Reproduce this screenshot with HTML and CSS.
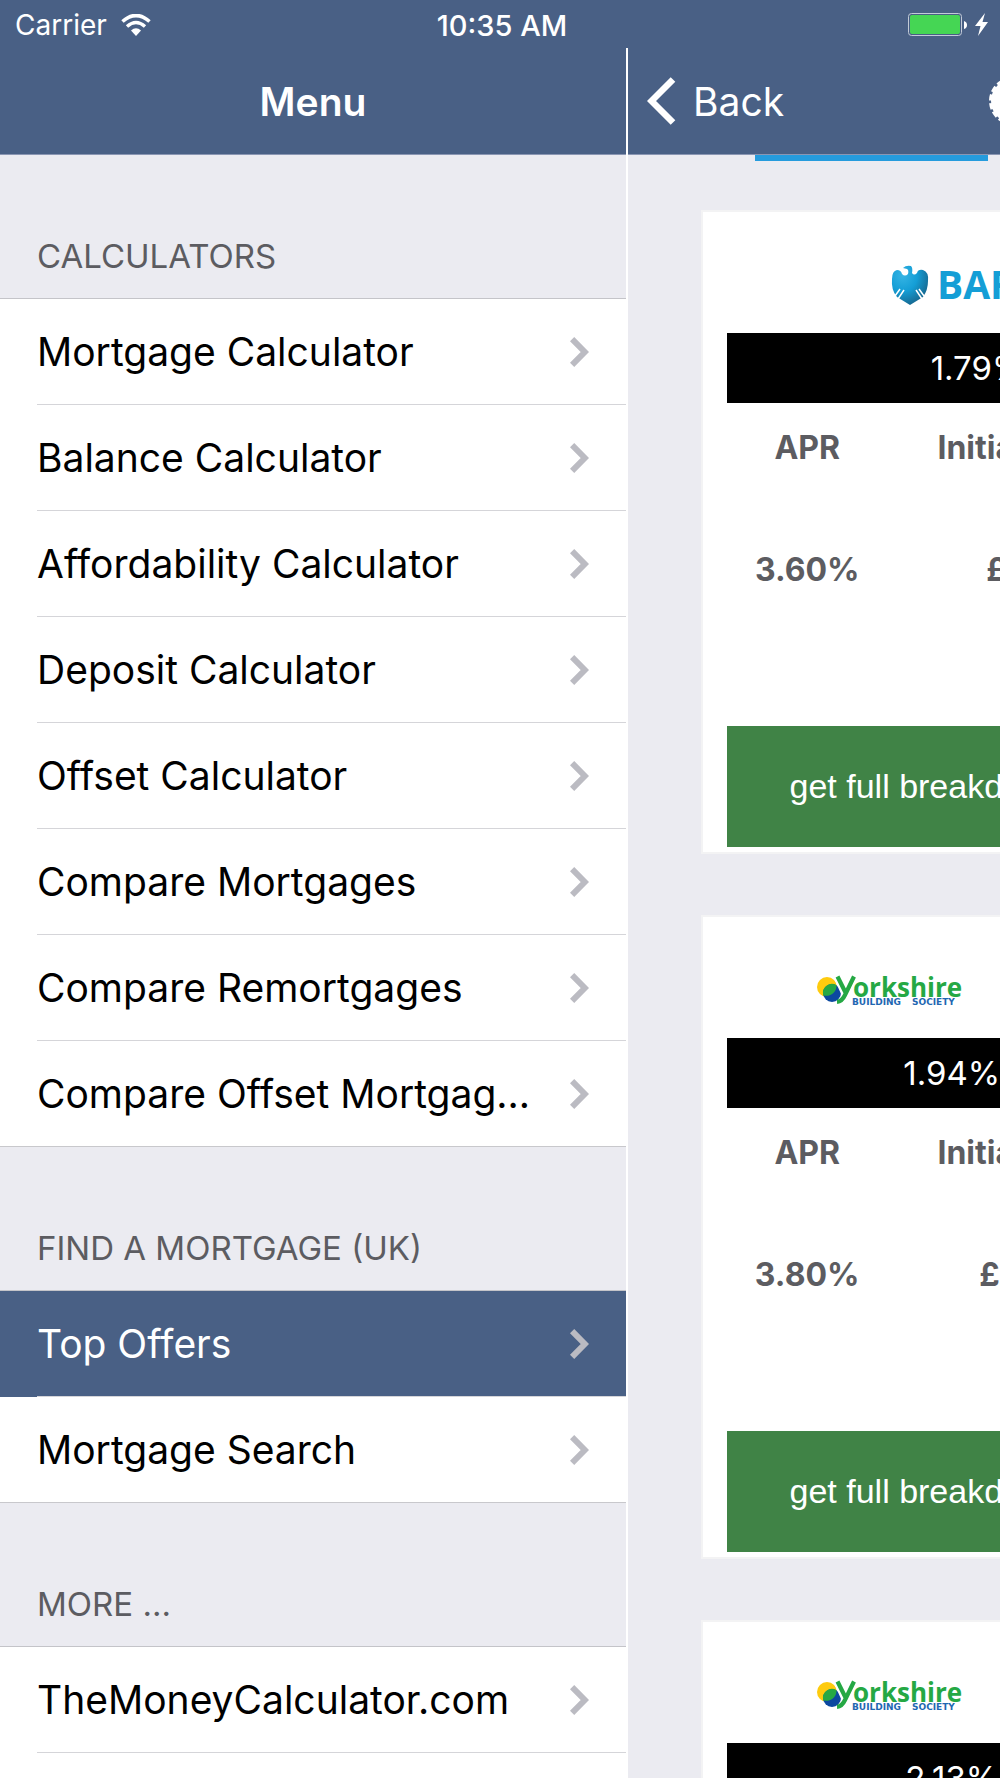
FILE: index.html
```html
<!DOCTYPE html>
<html lang="en">
<head>
    <meta charset="UTF-8">
    <meta name="viewport" content="width=device-width, initial-scale=1">
    <title>Menu</title>
    <link rel="stylesheet" href="styles.css">
</head>
<body>
    <!-- shared shapes -->
    <svg class="defs" aria-hidden="true">
        <symbol id="chevron" viewBox="0 0 19 30">
            <path d="M2.1 2.1 L14.8 15 L2.1 27.9" fill="none" stroke="currentColor" stroke-width="6"/>
        </symbol>
        <symbol id="yorkshire" viewBox="0 0 160 34">
            <circle cx="10" cy="12" r="10" fill="#fecb0e"/>
            <circle cx="15" cy="18" r="9" fill="#0b48a0"/>
            <path d="M6.2 20.2 A9 9 0 0 1 19.5 10.2 A10 10 0 0 1 6.2 20.2 Z" fill="#25a844"/>
            <path d="M17 0 L28 24" stroke="#fff" stroke-width="3"/>
            <path d="M20.5 1.5 L29 18.5 M37 1.5 L28 20 Q25 26.5 20 26.8" fill="none" stroke="#25a844" stroke-width="4.2"/>
            <text x="36" y="22" class="york-name">orkshire</text>
            <text x="35" y="30" class="york-sub">BUILDING</text>
            <text x="95" y="30" class="york-sub">SOCIETY</text>
        </symbol>
    </svg>

    <header class="status-bar">
        <div class="carrier">
            <span>Carrier</span>
            <svg width="30" height="22" viewBox="0 0 30 22" aria-hidden="true">
                <path d="M1.5 7.5 Q15 -4.5 28.5 7.5" fill="none" stroke="#fff" stroke-width="3.6"/>
                <path d="M6 12.4 Q15 4.4 24 12.4" fill="none" stroke="#fff" stroke-width="3.4"/>
                <path d="M10 16.6 Q15 12 20 16.6 L15 22 Z" fill="#fff"/>
            </svg>
        </div>
        <time>10:35 AM</time>
        <svg class="battery" width="82" height="26" viewBox="0 0 82 26" aria-hidden="true">
            <rect x="1.5" y="1.5" width="53" height="22" rx="3" fill="none" stroke="#c3cbd8"/>
            <rect x="3" y="3" width="50" height="19" rx="2" fill="#45d654"/>
            <path d="M57 9 Q60 10 60 13 Q60 16 57 17 Z" fill="#fff"/>
            <path d="M78 1 L68 14 H73.500 L71 24 L81 10 H75.500 Z" fill="#fff"/>
        </svg>
    </header>

    <div class="split">
        <nav class="sidebar">
            <div class="nav-bar">
                <h1>Menu</h1>
            </div>

            <h2>CALCULATORS</h2>
            <ul class="menu">
                <li><a href="#"><span>Mortgage Calculator</span><svg><use href="#chevron"/></svg></a></li>
                <li><a href="#"><span>Balance Calculator</span><svg><use href="#chevron"/></svg></a></li>
                <li><a href="#"><span>Affordability Calculator</span><svg><use href="#chevron"/></svg></a></li>
                <li><a href="#"><span>Deposit Calculator</span><svg><use href="#chevron"/></svg></a></li>
                <li><a href="#"><span>Offset Calculator</span><svg><use href="#chevron"/></svg></a></li>
                <li><a href="#"><span>Compare Mortgages</span><svg><use href="#chevron"/></svg></a></li>
                <li><a href="#"><span>Compare Remortgages</span><svg><use href="#chevron"/></svg></a></li>
                <li><a href="#"><span>Compare Offset Mortgag...</span><svg><use href="#chevron"/></svg></a></li>
            </ul>

            <h2>FIND A MORTGAGE (UK)</h2>
            <ul class="menu">
                <li class="selected"><a href="#"><span>Top Offers</span><svg><use href="#chevron"/></svg></a></li>
                <li><a href="#"><span>Mortgage Search</span><svg><use href="#chevron"/></svg></a></li>
            </ul>

            <h2>MORE ...</h2>
            <ul class="menu open">
                <li><a href="#"><span>TheMoneyCalculator.com</span><svg><use href="#chevron"/></svg></a></li>
            </ul>
        </nav>

        <!-- full width page, pushed aside by the open menu -->
        <main class="page">
            <div class="nav-bar">
                <button class="back" type="button">
                    <svg width="29" height="48" viewBox="0 0 29 48" aria-hidden="true">
                        <path d="M26 2.500 L4.500 24 L26 45.500" fill="none" stroke="#fff" stroke-width="6.500"/>
                    </svg>
                    Back
                </button>
                <svg class="gear" width="50" height="50" viewBox="0 0 50 50" aria-hidden="true">
                    <circle cx="25" cy="25" r="22" fill="#fff"/>
                    <circle cx="25" cy="25" r="22" fill="none" stroke="#fff" stroke-width="4" stroke-dasharray="6 2.640"/>
                </svg>
            </div>
            <div class="tab-line"></div>

            <section class="card">
                <div class="logo barclays">
                    <svg width="270" height="42" viewBox="0 0 270 42" role="img" aria-label="Barclays">
                        <defs>
                            <radialGradient id="eagle" cx="0.3" cy="0.25" r="0.8">
                                <stop offset="0" stop-color="#35b4e4"/>
                                <stop offset="0.5" stop-color="#149ed6"/>
                                <stop offset="1" stop-color="#17658c"/>
                            </radialGradient>
                        </defs>
                        <path d="M12 3 Q15 0 20 1 Q22 3 21 8 Q23 11 26 8 Q27 4 32 5 Q38 7 37 16 Q37 25 32 32 L19 40 L6 32 Q0 25 1 14 Q1 6 6 5 Q10 5 11 9 Q14 12 17 9 Q18 5 16 4 Z" fill="url(#eagle)"/>
                        <path d="M9 24 L4 31 M13 25 L7 34 M28 24 L33 31 M25 25 L31 34" stroke="#fff" stroke-width="1.500"/>
                        <text x="46" y="34" class="barclays-name">BARCLAYS</text>
                    </svg>
                </div>
                <p class="rate">1.79% fixed until Jul 2019</p>
                <table>
                    <tr><th>APR</th><th>Initial Rates</th><th></th></tr>
                    <tr><td>3.60%</td><td>£999</td><td></td></tr>
                </table>
                <button class="more" type="button">get full breakdown</button>
            </section>

            <section class="card">
                <div class="logo yorkshire">
                    <svg width="160" height="34" role="img" aria-label="Yorkshire Building Society"><use href="#yorkshire"/></svg>
                </div>
                <p class="rate">1.94% 2 year fixed until 2019</p>
                <table>
                    <tr><th>APR</th><th>Initial Rates</th><th></th></tr>
                    <tr><td>3.80%</td><td>£1495</td><td></td></tr>
                </table>
                <button class="more" type="button">get full breakdown</button>
            </section>

            <section class="card">
                <div class="logo yorkshire">
                    <svg width="160" height="34" role="img" aria-label="Yorkshire Building Society"><use href="#yorkshire"/></svg>
                </div>
                <p class="rate">2.13% 2 year fixed until 2019</p>
            </section>
        </main>
    </div>
</body>
</html>
```
FILE: styles.css
```css
* {
    box-sizing: border-box;
}
body {
    margin: 0;
    height: 100vh;
    display: flex;
    flex-direction: column;
    overflow: hidden;
    font-family: Inter, "Liberation Sans", sans-serif;
    background-color: #ebebf1;
}
h1, h2, p, ul {
    margin: 0;
    padding: 0;
    font-weight: normal;
}
button {
    border: none;
    color: white;
    cursor: pointer;
}
.defs {
    display: none;
}
.status-bar {
    flex: none;
    display: grid;
    grid-template-columns: 1fr auto 1fr;
    align-items: center;
    height: 48px;
    padding: 2px 11px 0 15px;
    font-size: 28px;
    color: white;
    background-color: #496085;
}
.status-bar time {
    font-size: 29px;
    font-weight: 500;
}
.carrier {
    display: flex;
    align-items: center;
    gap: 14px;
}
.battery {
    justify-self: end;
}
.split {
    flex: 1;
    min-height: 0;
    display: flex;
    overflow: hidden;
}
.sidebar {
    flex: none;
    width: 62.8%;
    border-right: 2px solid white;
}
.nav-bar {
    display: flex;
    align-items: center;
    height: 107px;
    border-bottom: 1px solid #8a96b3;
    color: white;
    background-color: #496085;
}
.nav-bar h1 {
    flex: 1;
    font-size: 39px;
    font-weight: 600;
    text-align: center;
}
.sidebar h2 {
    height: 143px;
    padding: 81px 37px 0;
    font-size: 33px;
    line-height: 40px;
    color: #5c5c61;
}
.menu {
    list-style: none;
    border-top: 1px solid #c4c4c9;
    border-bottom: 1px solid #c8c8cc;
    background-color: white;
}
.menu li {
    padding-left: 37px;
}
.menu a {
    display: flex;
    align-items: center;
    justify-content: space-between;
    height: 106px;
    padding-right: 37px;
    border-bottom: 1px solid #d5d5d9;
    font-size: 39px;
    color: black;
    text-decoration: none;
}
.menu li:last-child a {
    height: 105px;
    border-bottom: none;
}
.menu.open {
    border-bottom: none;
    height: 200px;
}
.menu.open li:last-child a {
    height: 106px;
    border-bottom: 1px solid #d5d5d9;
}
.menu svg {
    flex: none;
    width: 19px;
    height: 30px;
    color: #bbbbc2;
}
.menu .selected {
    background-color: #496085;
}
.menu .selected a {
    color: white;
}
.page {
    flex: none;
    width: 100%;
}
.back {
    display: flex;
    align-items: center;
    gap: 17px;
    padding: 0 0 0 19px;
    font-family: inherit;
    font-size: 39px;
    background: none;
}
.gear {
    margin-left: 204px;
}
.tab-line {
    width: 233px;
    height: 6px;
    margin-left: 127px;
    background-color: #259bdd;
}
.card {
    height: 644px;
    margin: 0 73px 61px;
    padding: 0 24px 3px;
    border: 2px solid #f3f3f4;
    background-color: white;
}
.tab-line + .card {
    margin-top: 49px;
}
.logo {
    height: 121px;
}
.barclays {
    padding: 53px 0 0 164px;
}
.barclays-name {
    font: bold 39px "Open Sans", sans-serif;
    fill: #149ed6;
}
.yorkshire {
    padding: 58px 0 0 90px;
}
.york-name {
    font: bold 26px "Open Sans", sans-serif;
    fill: #25a844;
}
.york-sub {
    font: bold 9px "DejaVu Sans", sans-serif;
    fill: #1f67b2;
}
.rate {
    height: 70px;
    font-size: 33px;
    line-height: 70px;
    text-align: center;
    white-space: nowrap;
    color: white;
    background-color: black;
}
table {
    width: 100%;
    height: 323px;
    table-layout: fixed;
    border-collapse: collapse;
    text-align: center;
    font-weight: bold;
    color: #5c5c61;
}
th, td {
    padding: 25px 0 0;
    vertical-align: top;
    font-size: 32px;
    line-height: 40px;
}
th {
    height: 122px;
}
th:first-child {
    width: 20%;
}
th:nth-child(2) {
    width: 35%;
}
.more {
    display: block;
    width: 50%;
    height: 121px;
    font-family: "Liberation Sans", sans-serif;
    font-size: 34px;
    background-color: #408346;
}
```
